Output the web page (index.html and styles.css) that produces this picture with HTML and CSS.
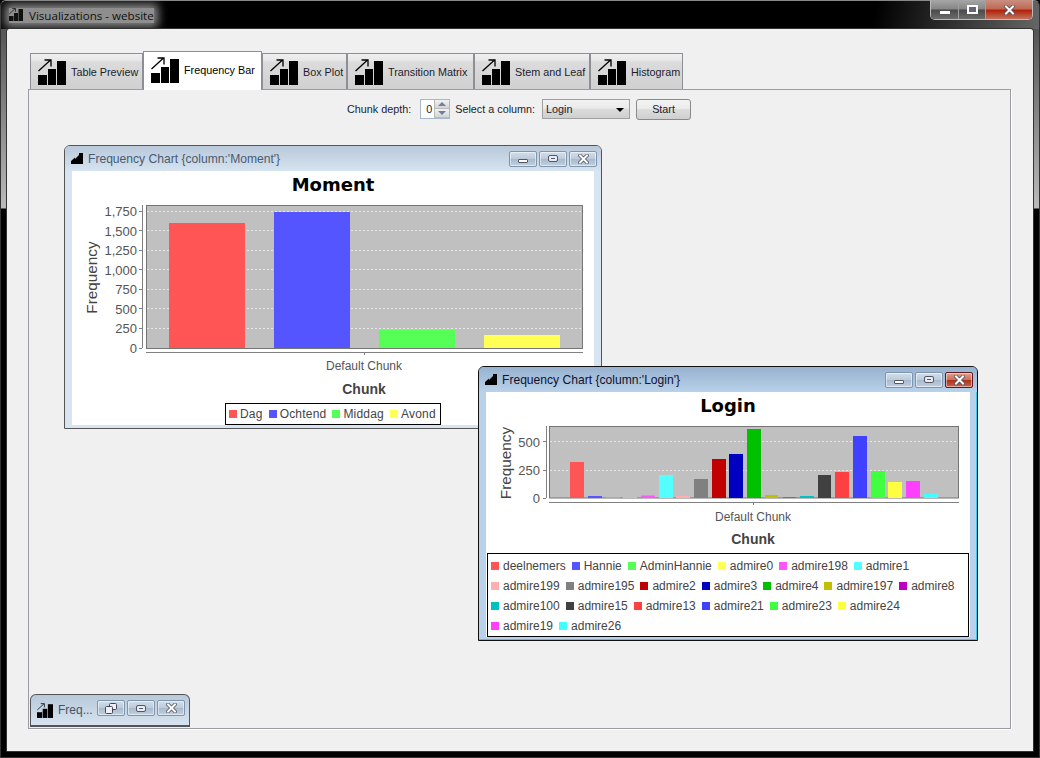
FILE: index.html
```html
<!DOCTYPE html>
<html lang="en">
<head>
  <meta charset="UTF-8" />
  <title>Visualizations - website</title>
  <link rel="stylesheet" href="styles.css">
</head>
<body>

<svg class="defs">
  <symbol id="chartIcon" viewBox="0 0 28 26">
    <rect x="0" y="16" width="9" height="10" />
    <rect x="10" y="10" width="8" height="16" />
    <rect x="19" y="2" width="9" height="24" />
    <path d="M0.5 12 L12 1.5 M6.5 1 H13 V7.5" fill="none" stroke="#000" stroke-width="1.3" />
  </symbol>
  <symbol id="frameIcon" viewBox="0 0 12 11">
    <path d="M0 11 V8 L4 4.5 V6 L8 2 V0 H12 V11 Z" />
  </symbol>
  <symbol id="closeGlyph" viewBox="0 0 11 10">
    <path d="M2 1.5 L9 8.5 M9 1.5 L2 8.5" fill="none" stroke="#4a4f5c" stroke-width="3.6" stroke-linecap="square" />
    <path d="M2 1.5 L9 8.5 M9 1.5 L2 8.5" fill="none" stroke="#fff" stroke-width="2" stroke-linecap="square" />
  </symbol>
  <symbol id="restoreGlyph" viewBox="0 0 12 11">
    <rect x="4.5" y="0.5" width="7" height="6" rx="1" fill="#eef2f6" stroke="#445" />
    <rect x="0.5" y="3.5" width="7" height="7" rx="1" fill="#eef2f6" stroke="#445" />
  </symbol>
</svg>

<div class="window">
  <div class="titlebar">
    <svg class="app-icon"><use href="#chartIcon" /></svg>
    <span class="app-title">Visualizations - website</span>
    <div class="win-buttons">
      <div class="win-btn win-min"><span class="glyph-min"></span></div>
      <div class="win-btn win-max"><span class="glyph-max"></span></div>
      <div class="win-btn win-close"><svg class="close-x"><use href="#closeGlyph" /></svg></div>
    </div>
  </div>

  <div class="client">
    <div class="tabs">
      <div class="tab tab-w113"><svg class="tab-icon"><use href="#chartIcon" /></svg>Table Preview</div>
      <div class="tab active"><svg class="tab-icon"><use href="#chartIcon" /></svg>Frequency Bar</div>
      <div class="tab tab-w85"><svg class="tab-icon"><use href="#chartIcon" /></svg>Box Plot</div>
      <div class="tab tab-w127"><svg class="tab-icon"><use href="#chartIcon" /></svg>Transition Matrix</div>
      <div class="tab tab-w116"><svg class="tab-icon"><use href="#chartIcon" /></svg>Stem and Leaf</div>
      <div class="tab tab-w93"><svg class="tab-icon"><use href="#chartIcon" /></svg>Histogram</div>
    </div>

    <div class="panel">
      <div class="toolbar">
        <label>Chunk depth:</label>
        <div class="spinner">
          <span class="spin-value">0</span>
          <div class="spin-btns">
            <div class="spin-btn"><i class="arrow-up"></i></div>
            <div class="spin-btn"><i class="arrow-down"></i></div>
          </div>
        </div>
        <label>Select a column:</label>
        <div class="combo">Login<i class="combo-arrow"></i></div>
        <div class="start-btn">Start</div>
      </div>

      <div class="desktop">
        <!-- Moment chart -->
        <div class="frame frame-moment">
          <div class="frame-title">
            <svg class="frame-icon"><use href="#frameIcon" /></svg>
            <span>Frequency Chart {column:'Moment'}</span>
            <div class="frame-btns">
              <div class="frame-btn"><span class="glyph-min"></span></div>
              <div class="frame-btn"><span class="glyph-max"></span></div>
              <div class="frame-btn"><svg class="close-x"><use href="#closeGlyph" /></svg></div>
            </div>
          </div>
          <div class="frame-body">
            <svg class="chart chart-moment" viewBox="72 171 522 188">
              <text class="chart-title" x="333" y="191">Moment</text>
              <rect class="plot" x="146.5" y="205.5" width="436" height="143" />
              <g class="grid">
                <path d="M147 211.5H582M147 230.5H582M147 250.5H582M147 269.5H582M147 289.5H582M147 308.5H582M147 328.5H582" />
              </g>
              <rect x="169" y="223" width="76" height="125" fill="#ff5555" />
              <rect x="274" y="212" width="76" height="136" fill="#5555ff" />
              <rect x="379" y="330" width="76" height="18" fill="#55ff55" />
              <rect x="484" y="335" width="76" height="13" fill="#ffff55" />
              <path class="axis" d="M142.5 205V348M139 211.5H142M139 230.5H142M139 250.5H142M139 269.5H142M139 289.5H142M139 308.5H142M139 328.5H142M139 348.5H142M146 352.5H583M364.5 353V355" />
              <g class="y-labels">
                <text x="137" y="216">1,750</text>
                <text x="137" y="236">1,500</text>
                <text x="137" y="255">1,250</text>
                <text x="137" y="275">1,000</text>
                <text x="137" y="294">750</text>
                <text x="137" y="314">500</text>
                <text x="137" y="333">250</text>
                <text x="137" y="353">0</text>
              </g>
              <text class="axis-label" transform="translate(97 277.5) rotate(-90)">Frequency</text>
            </svg>
            <div class="under-chart">
              <div class="cat-label">Default Chunk</div>
              <div class="axis-name">Chunk</div>
              <div class="legend legend-moment">
                <div class="item"><i class="c1"></i>Dag</div>
                <div class="item"><i class="c2"></i>Ochtend</div>
                <div class="item"><i class="c3"></i>Middag</div>
                <div class="item"><i class="c4"></i>Avond</div>
              </div>
            </div>
          </div>
        </div>

        <!-- Login chart -->
        <div class="frame frame-login">
          <div class="frame-title">
            <svg class="frame-icon"><use href="#frameIcon" /></svg>
            <span>Frequency Chart {column:'Login'}</span>
            <div class="frame-btns">
              <div class="frame-btn"><span class="glyph-min"></span></div>
              <div class="frame-btn"><span class="glyph-max"></span></div>
              <div class="frame-btn btn-red"><svg class="close-x"><use href="#closeGlyph" /></svg></div>
            </div>
          </div>
          <div class="frame-body">
            <svg class="chart chart-login" viewBox="486 392 484 118">
              <text class="chart-title" x="728" y="412">Login</text>
              <rect class="plot" x="549.5" y="426.5" width="409" height="71.5" />
              <g class="grid">
                <path d="M550 441.5H958M550 470.5H958" />
              </g>
              <rect x="570" y="462" width="14" height="36" fill="#ff5555" />
              <rect x="588" y="496" width="14" height="2" fill="#5555ff" />
              <rect x="606" y="497.5" width="14" height="0.5" fill="#55ff55" />
              <rect x="623" y="497.5" width="14" height="0.5" fill="#ffff55" />
              <rect x="641" y="495.5" width="14" height="2.5" fill="#ff55ff" />
              <rect x="659" y="475" width="14" height="23" fill="#55ffff" />
              <rect x="676" y="496" width="14" height="2" fill="#ffafaf" />
              <rect x="694" y="479" width="14" height="19" fill="#808080" />
              <rect x="712" y="459" width="14" height="39" fill="#c00000" />
              <rect x="729" y="454" width="14" height="44" fill="#0000c0" />
              <rect x="747" y="429" width="14" height="69" fill="#00c000" />
              <rect x="765" y="495" width="13" height="3" fill="#c0c000" />
              <rect x="783" y="497.5" width="13" height="0.5" fill="#c000c0" />
              <rect x="800" y="496" width="14" height="2" fill="#00c0c0" />
              <rect x="818" y="475" width="13" height="23" fill="#404040" />
              <rect x="835" y="472" width="14" height="26" fill="#ff4040" />
              <rect x="853" y="436" width="14" height="62" fill="#4040ff" />
              <rect x="871" y="471" width="14" height="27" fill="#40ff40" />
              <rect x="888" y="482" width="14" height="16" fill="#ffff40" />
              <rect x="906" y="481" width="14" height="17" fill="#ff40ff" />
              <rect x="924" y="494" width="14" height="4" fill="#40ffff" />
              <path class="axis" d="M546.5 426V498M543 441.5H546M543 470.5H546M543 498.5H546M549 502.5H959M753.5 503V505" />
              <g class="y-labels">
                <text x="540" y="447">500</text>
                <text x="540" y="475">250</text>
                <text x="540" y="503">0</text>
              </g>
              <text class="axis-label" transform="translate(511 463) rotate(-90)">Frequency</text>
            </svg>
            <div class="under-chart">
              <div class="cat-label">Default Chunk</div>
              <div class="axis-name">Chunk</div>
              <div class="legend legend-login">
                <div class="item"><i class="c1"></i>deelnemers</div>
                <div class="item"><i class="c2"></i>Hannie</div>
                <div class="item"><i class="c3"></i>AdminHannie</div>
                <div class="item"><i class="c4"></i>admire0</div>
                <div class="item"><i class="c5"></i>admire198</div>
                <div class="item"><i class="c6"></i>admire1</div>
                <div class="item"><i class="c7"></i>admire199</div>
                <div class="item"><i class="c8"></i>admire195</div>
                <div class="item"><i class="c9"></i>admire2</div>
                <div class="item"><i class="c10"></i>admire3</div>
                <div class="item"><i class="c11"></i>admire4</div>
                <div class="item"><i class="c12"></i>admire197</div>
                <div class="item"><i class="c13"></i>admire8</div>
                <div class="item"><i class="c14"></i>admire100</div>
                <div class="item"><i class="c15"></i>admire15</div>
                <div class="item"><i class="c16"></i>admire13</div>
                <div class="item"><i class="c17"></i>admire21</div>
                <div class="item"><i class="c18"></i>admire23</div>
                <div class="item"><i class="c19"></i>admire24</div>
                <div class="item"><i class="c20"></i>admire19</div>
                <div class="item"><i class="c21"></i>admire26</div>
              </div>
            </div>
          </div>
        </div>

        <!-- Iconified frame -->
        <div class="icon-frame">
          <svg class="small-icon"><use href="#chartIcon" /></svg>
          <span>Freq...</span>
          <div class="frame-btns">
            <div class="frame-btn"><svg class="restore-glyph"><use href="#restoreGlyph" /></svg></div>
            <div class="frame-btn"><span class="glyph-max"></span></div>
            <div class="frame-btn"><svg class="close-x"><use href="#closeGlyph" /></svg></div>
          </div>
        </div>
      </div>
    </div>
  </div>
</div>

</body>
</html>
```

FILE: styles.css
```css
html, body {
  margin: 0;
  padding: 0;
  height: 100%;
  overflow: hidden;
  background: #000;
}
body {
  width: 1040px;
  height: 758px;
  font-family: "Liberation Sans", sans-serif;
  font-size: 11px;
  color: #1c1c2c;
}
.defs {
  display: none;
}

/* outer window */
.window {
  width: 1040px;
  height: 758px;
  box-sizing: border-box;
  display: flex;
  flex-direction: column;
  padding: 0 6px 6px;
  background: linear-gradient(#444 0, #bbb 207px, #000 208px);
  border: 1px solid #333;
  border-top-color: #888;
  border-radius: 6px 6px 0 0;
}
.titlebar {
  height: 28px;
  flex: none;
  display: flex;
  align-items: flex-start;
  margin: 0 -6px;
  padding-left: 8px;
  background: linear-gradient(100deg, #000 0, #000 84%, #666 100%);
  border-radius: 5px 5px 0 0;
}
.app-icon {
  width: 14px;
  height: 13px;
  margin-top: 7px;
  fill: #111;
  z-index: 1;
}
.app-title {
  margin: 7px 0 0 -14px;
  padding-left: 20px;
  font-family: "Open Sans", sans-serif;
  font-size: 11.6px;
  line-height: 15px;
  color: #111;
  background: #8e8e8e;
  box-shadow: 0 0 10px 4px #8e8e8e;
}
.win-buttons {
  margin-left: auto;
  margin-right: 6px;
  display: flex;
  height: 20px;
  box-sizing: border-box;
  margin-top: -1px;
  border: 1px solid #bbb;
  border-top: none;
  border-radius: 0 0 5px 5px;
  overflow: hidden;
}
.win-btn {
  display: flex;
  align-items: center;
  justify-content: center;
  height: 19px;
  background: linear-gradient(#a6a6a6 0, #858585 48%, #4a4a4a 52%, #6c6c6c 100%);
  border-right: 1px solid #a0a0a0;
  color: #fff;
}
.win-min { width: 27px; }
.win-max { width: 26px; }
.win-close {
  width: 46px;
  border-right: none;
  background: linear-gradient(#c98f82 0, #c06a55 45%, #b0240c 55%, #c4705c 100%);
}
.close-x {
  width: 11px;
  height: 10px;
}
.win-btn .glyph-min {
  width: 10px;
  height: 3px;
  background: #fff;
  margin-top: 6px;
}
.win-btn .glyph-max {
  width: 7px;
  height: 5px;
  border: 2px solid #fff;
  background: #667;
}

/* client area */
.client {
  flex: 1;
  display: flex;
  flex-direction: column;
  background: #f0f0f0;
  padding: 22px 22px 22px 21px;
  border-radius: 2px 2px 0 0;
  outline: 1px solid #333;
  min-height: 0;
}
.tabs {
  display: flex;
  height: 38px;
  flex: none;
  padding-left: 2px;
  align-items: flex-end;
  position: relative;
  z-index: 1;
}
.tab {
  height: 36px;
  box-sizing: border-box;
  display: flex;
  align-items: center;
  padding-left: 7px;
  font-size: 10.8px;
  white-space: nowrap;
  border: 1px solid #8e8e96;
  border-bottom: none;
  background: linear-gradient(#f0f0f0 0, #e6e6e6 20%, #dcdcdc 22%, #d0d0d0 100%);
}
.tab-icon {
  width: 28px;
  height: 26px;
  margin-right: 5px;
  fill: #000;
}
.tab-w113 { width: 113px; }
.tab-w85 { width: 85px; }
.tab-w127 { width: 127px; }
.tab-w116 { width: 116px; }
.tab-w93 { width: 93px; }
.tab.active {
  width: 119px;
  height: 39px;
  margin-bottom: -1px;
  padding-left: 7px;
  padding-bottom: 3px;
  background: #fff;
  color: #000;
}
.panel {
  flex: 1;
  display: flex;
  flex-direction: column;
  border: 1px solid #9c9ca4;
  box-shadow: 1px 1px 0 #fff;
  min-height: 0;
}
.toolbar {
  height: 38px;
  flex: none;
  display: flex;
  align-items: flex-start;
  justify-content: flex-start;
  padding: 9px 0 0 318px;
  box-sizing: border-box;
  font-size: 10.8px;
}
.toolbar label {
  line-height: 20px;
}
.spinner {
  width: 30px;
  height: 20px;
  margin: 0 5px 0 9px;
  box-sizing: border-box;
  border: 1px solid #a8b8cc;
  background: #fff;
  display: flex;
  justify-content: space-between;
}
.spin-value {
  padding-left: 5px;
  line-height: 18px;
}
.spin-btns {
  width: 15px;
  display: flex;
  flex-direction: column;
}
.spin-btn {
  flex: 1;
  display: flex;
  align-items: center;
  justify-content: center;
  background: linear-gradient(#f2f2f2, #d4d4d4);
  border-left: 1px solid #bbb;
  border-bottom: 1px solid #bbb;
}
.arrow-up, .arrow-down {
  width: 0;
  height: 0;
  border-left: 4px solid transparent;
  border-right: 4px solid transparent;
}
.arrow-up { border-bottom: 4px solid #6d7ea8; }
.arrow-down { border-top: 4px solid #6d7ea8; }
.combo {
  width: 88px;
  height: 20px;
  box-sizing: border-box;
  margin-left: 7px;
  padding-left: 3px;
  line-height: 18px;
  border: 1px solid #a0a0a0;
  background: linear-gradient(#f2f2f2 0, #ebebeb 45%, #dcdcdc 50%, #cfcfcf 100%);
  position: relative;
}
.combo-arrow {
  position: absolute;
  right: 5px;
  top: 8px;
  border-left: 4px solid transparent;
  border-right: 4px solid transparent;
  border-top: 4px solid #000;
}
.start-btn {
  width: 55px;
  height: 21px;
  box-sizing: border-box;
  margin-left: 6px;
  text-align: center;
  line-height: 19px;
  border: 1px solid #8a8a8a;
  border-radius: 3px;
  background: linear-gradient(#f4f4f4 0, #ebebeb 45%, #dddddd 50%, #cfcfcf 100%);
}

/* internal frames */
.desktop {
  flex: 1;
  position: relative;
}
.frame {
  position: absolute;
  box-sizing: border-box;
  border: 1px solid #555;
  border-radius: 6px 6px 0 0;
  display: flex;
  flex-direction: column;
  padding: 0 7px 3px;
}
.frame-moment {
  left: 35px;
  top: 17px;
  width: 538px;
  height: 284px;
  background: #d8e4f1;
}
.frame-moment .frame-title {
  background: linear-gradient(#b9c9da, #d6e3f0);
  color: #4a5a70;
}
.frame-login {
  left: 449px;
  top: 238px;
  width: 500px;
  height: 275px;
  background: #b9d1e9;
  border-color: #111;
  box-shadow: inset -1px -1px 0 #38c8f0;
}
.frame-login .frame-title {
  background: linear-gradient(#97b2d0, #b9d1e9);
  color: #101030;
}
.frame-title {
  height: 25px;
  flex: none;
  margin: 0 -7px;
  padding-left: 6px;
  display: flex;
  align-items: center;
  border-radius: 5px 5px 0 0;
  font-size: 12.1px;
  white-space: nowrap;
}
.frame-icon {
  width: 12px;
  height: 11px;
  margin-right: 5px;
  fill: #000;
}
.frame-btns {
  margin-left: auto;
  margin-right: 4px;
  display: flex;
  gap: 2px;
}
.frame-btn {
  width: 28px;
  height: 16px;
  box-sizing: border-box;
  display: flex;
  align-items: center;
  justify-content: center;
  border: 1px solid #8094ac;
  border-radius: 2px;
  box-shadow: inset 0 0 0 1px rgba(255,255,255,0.5);
  background: linear-gradient(#d2deea 0, #bccbdc 48%, #a8bace 52%, #c0d0e0 100%);
}
.frame-btn .glyph-min {
  width: 8px;
  height: 2px;
  margin-top: 5px;
  background: #fff;
  border: 1px solid #556;
  border-radius: 1px;
}
.frame-btn .glyph-max {
  width: 4px;
  height: 1px;
  border: 2px solid #e8eef4;
  background: #556;
  outline: 1px solid #556;
  border-radius: 1px;
}
.restore-glyph {
  width: 12px;
  height: 11px;
}
.btn-red {
  border-color: #601818;
  background: linear-gradient(#e0a090 0, #c9705c 48%, #b03018 52%, #c9604c 100%);
}
.frame-body {
  flex: 1;
  background: #fff;
  min-height: 0;
  display: flex;
  flex-direction: column;
  align-items: center;
}

/* charts */
.chart {
  display: block;
  flex: none;
}
.chart-moment { width: 522px; height: 188px; }
.chart-login { width: 484px; height: 118px; }
.chart text {
  font-family: "Liberation Sans", sans-serif;
}
.chart .chart-title {
  font-family: "DejaVu Sans", sans-serif;
  font-size: 18px;
  font-weight: bold;
  text-anchor: middle;
  fill: #000;
}
.plot {
  fill: #c0c0c0;
  stroke: #757575;
}
.grid path {
  fill: none;
  stroke: #e6e6e6;
  stroke-dasharray: 2 2;
}
.axis {
  fill: none;
  stroke: #808080;
}
.y-labels text {
  font-size: 13px;
  text-anchor: end;
  fill: #555;
}
.axis-label {
  font-size: 15.3px;
  text-anchor: middle;
  fill: #444;
}
.under-chart {
  width: 100%;
  display: flex;
  flex-direction: column;
  align-items: center;
  color: #555;
}
.chart-moment + .under-chart { padding-left: 62px; box-sizing: border-box; }
.chart-login + .under-chart { padding-left: 50px; box-sizing: border-box; }
.cat-label {
  font-size: 12px;
  line-height: 14px;
}
.axis-name {
  font-size: 14px;
  font-weight: bold;
  line-height: 16px;
  margin-top: 8px;
  color: #444;
}
.chart-login + .under-chart .axis-name {
  margin-top: 7px;
}
.legend {
  display: flex;
  flex-wrap: wrap;
  box-sizing: border-box;
  border: 1px solid #000;
  background: #fff;
  font-size: 12px;
  color: #444;
}
.legend-moment {
  margin: 6px 0 0 -62px;
  height: 22px;
  width: 216px;
  padding: 0 2px 0 3px;
  column-gap: 6px;
  align-items: center;
  letter-spacing: 0.2px;
}
.legend-moment .item i {
  margin-right: 3px;
}
.legend-login {
  margin: 6px 0 0 -50px;
  width: 482px;
  height: 84px;
  padding: 2px 3px;
  column-gap: 6px;
  align-content: space-between;
}
.item {
  display: flex;
  align-items: center;
  height: 20px;
  white-space: nowrap;
}
.item i {
  width: 8px;
  height: 8px;
  margin-right: 4px;
}
.c1 { background: #ff5555; }
.c2 { background: #5555ff; }
.c3 { background: #55ff55; }
.c4 { background: #ffff55; }
.c5 { background: #ff55ff; }
.c6 { background: #55ffff; }
.c7 { background: #ffafaf; }
.c8 { background: #808080; }
.c9 { background: #c00000; }
.c10 { background: #0000c0; }
.c11 { background: #00c000; }
.c12 { background: #c0c000; }
.c13 { background: #c000c0; }
.c14 { background: #00c0c0; }
.c15 { background: #404040; }
.c16 { background: #ff4040; }
.c17 { background: #4040ff; }
.c18 { background: #40ff40; }
.c19 { background: #ffff40; }
.c20 { background: #ff40ff; }
.c21 { background: #40ffff; }

/* iconified frame */
.icon-frame {
  position: absolute;
  left: 1px;
  bottom: 1px;
  width: 160px;
  height: 33px;
  box-sizing: border-box;
  display: flex;
  align-items: center;
  padding-left: 6px;
  border: 1px solid #555;
  border-bottom: 2px solid #555;
  border-radius: 6px 6px 0 0;
  background: linear-gradient(#b9c9da, #d6e3f0);
  color: #44546c;
  font-size: 12px;
}
.small-icon {
  width: 16px;
  height: 15px;
  margin-right: 5px;
  fill: #000;
}
.icon-frame .frame-btn {
  margin-top: -4px;
}
```
